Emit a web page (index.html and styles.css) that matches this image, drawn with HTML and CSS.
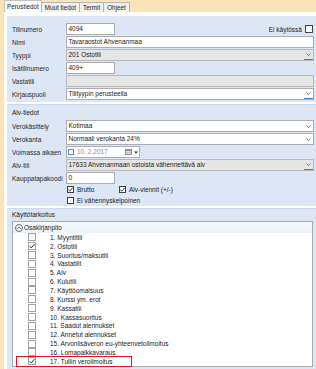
FILE: index.html
```html
<!DOCTYPE html>
<html lang="fi">
<head>
  <meta charset="UTF-8" />
  <title>Tili</title>
  <link rel="stylesheet" href="styles.css">
</head>
<body>
  <div class="window">
    <div class="tabs">
      <div class="tab active">Perustiedot</div>
      <div class="tab">Muut tiedot</div>
      <div class="tab">Termit</div>
      <div class="tab">Ohjeet</div>
    </div>

    <div class="page">
      <div class="panel main">
        <div class="row">
          <label>Tilinumero</label>
          <div class="field short">4094</div>
          <div class="spacer"></div>
          <span class="side-label">Ei käytössä</span>
          <span class="check big"></span>
        </div>
        <div class="row">
          <label>Nimi</label>
          <div class="field">Tavaraostot Ahvenanmaa</div>
        </div>
        <div class="row">
          <label>Tyyppi</label>
          <div class="field combo locked"><span>201 Ostotili</span><span class="drop blue"><svg width="5" height="3" viewBox="0 0 5 3"><path d="M0.5 0.5 L2.5 2.5 L4.5 0.5" fill="none" stroke="#555" stroke-width="0.8"/></svg></span></div>
        </div>
        <div class="row">
          <label>Isätilinumero</label>
          <div class="field short">409+</div>
        </div>
        <div class="row">
          <label>Vastatili</label>
          <div class="field locked"></div>
        </div>
        <div class="row">
          <label>Kirjauspuoli</label>
          <div class="field combo"><span>Tilityypin perusteella</span><span class="drop blue"><svg width="5" height="3" viewBox="0 0 5 3"><path d="M0.5 0.5 L2.5 2.5 L4.5 0.5" fill="none" stroke="#555" stroke-width="0.8"/></svg></span></div>
        </div>
      </div>

      <div class="panel alv">
        <div class="group-title">Alv-tiedot</div>
        <div class="row">
          <label>Verokäsittely</label>
          <div class="field combo"><span>Kotimaa</span><span class="drop"><svg width="5" height="3" viewBox="0 0 5 3"><path d="M0.5 0.5 L2.5 2.5 L4.5 0.5" fill="none" stroke="#555" stroke-width="0.8"/></svg></span></div>
        </div>
        <div class="row">
          <label>Verokanta</label>
          <div class="field combo"><span>Normaali verokanta 24%</span><span class="drop"><svg width="5" height="3" viewBox="0 0 5 3"><path d="M0.5 0.5 L2.5 2.5 L4.5 0.5" fill="none" stroke="#555" stroke-width="0.8"/></svg></span></div>
        </div>
        <div class="row">
          <label>Voimassa alkaen</label>
          <div class="field date">
            <span class="date-check"></span>
            <span class="date-text">10. 2.2017</span>
            <span class="spacer"></span>
            <svg class="cal" width="7" height="6" viewBox="0 0 7 6">
              <rect x="0.5" y="0.5" width="6" height="5" fill="#e8e8e8" stroke="#8c8c8c"/>
              <rect x="0.5" y="0.5" width="6" height="1.3" fill="#8c8c8c"/>
              <path d="M2.5 2 V5.5 M4.5 2 V5.5 M0.5 3.7 H6.5" stroke="#aaa" stroke-width="0.5"/>
            </svg>
            <svg class="caret" width="4" height="3" viewBox="0 0 4 3"><path d="M0 0.5 H4 L2 2.7 Z" fill="#333"/></svg>
          </div>
        </div>
        <div class="row">
          <label>Alv-tili</label>
          <div class="field combo locked"><span>17633 Ahvenanmaan ostoista vähennettävä alv</span><span class="drop blue"><svg width="5" height="3" viewBox="0 0 5 3"><path d="M0.5 0.5 L2.5 2.5 L4.5 0.5" fill="none" stroke="#555" stroke-width="0.8"/></svg></span></div>
        </div>
        <div class="row">
          <label>Kauppatapakoodi</label>
          <div class="field short">0</div>
        </div>
        <div class="check-row">
          <span class="opt"><span class="check"><svg width="7" height="7" viewBox="0 0 7 7"><path d="M1.2 3.6 L2.8 5.2 L5.8 1.6" fill="none" stroke="#222" stroke-width="0.9"/></svg></span>Brutto</span>
          <span class="opt"><span class="check"><svg width="7" height="7" viewBox="0 0 7 7"><path d="M1.2 3.6 L2.8 5.2 L5.8 1.6" fill="none" stroke="#222" stroke-width="0.9"/></svg></span>Alv-viennit (+/-)</span>
        </div>
        <div class="check-row">
          <span class="opt"><span class="check"></span>Ei vähennyskelpoinen</span>
        </div>
      </div>

      <div class="panel usage">
        <div class="group-title">Käyttötarkoitus</div>
        <div class="tree">
          <div class="tree-head">
            <span class="toggle"><svg width="6" height="6" viewBox="0 0 6 6"><path d="M1.3 3.8 L3 2.1 L4.7 3.8" fill="none" stroke="#333" stroke-width="0.8"/></svg></span>
            Osakirjanpito
          </div>
          <div class="item"><span class="box"></span>1. Myyntitili</div>
          <div class="item"><span class="box"><svg width="8" height="8" viewBox="0 0 8 8"><path d="M1.6 4.2 L3.3 5.9 L6.5 2" fill="none" stroke="#111" stroke-width="0.9"/></svg></span>2. Ostotili</div>
          <div class="item"><span class="box"></span>3. Suoritus/maksutili</div>
          <div class="item"><span class="box"></span>4. Vastatilit</div>
          <div class="item"><span class="box"></span>5. Alv</div>
          <div class="item"><span class="box"></span>6. Kulutili</div>
          <div class="item"><span class="box"></span>7. Käyttöomaisuus</div>
          <div class="item"><span class="box"></span>8. Kurssi ym. erot</div>
          <div class="item"><span class="box"></span>9. Kassatili</div>
          <div class="item"><span class="box"></span>10. Kassasuoritus</div>
          <div class="item"><span class="box"></span>11. Saadut alennukset</div>
          <div class="item"><span class="box"></span>12. Annetut alennukset</div>
          <div class="item"><span class="box"></span>15. Arvonlisäveron eu-yhteenvetoilmoitus</div>
          <div class="item"><span class="box"></span>16. Lomapalkkavaraus</div>
          <div class="item marked"><span class="box"><svg width="8" height="8" viewBox="0 0 8 8"><path d="M1.6 4.2 L3.3 5.9 L6.5 2" fill="none" stroke="#111" stroke-width="0.9"/></svg></span>17. Tullin veroilmoitus</div>
        </div>
      </div>
    </div>
  </div>
</body>
</html>
```

FILE: styles.css
```css
* { box-sizing: border-box; }
body {
  margin: 0;
  width: 316px;
  height: 369px;
  overflow: hidden;
  background: #fbe3b8;
  font-family: 'Liberation Sans', Arial, sans-serif;
  font-size: 6.5px;
  color: #222;
}
.window {
  display: flex;
  flex-direction: column;
  height: 369px;
  padding-left: 4px;
}
.tabs {
  display: flex;
  height: 12px;
  flex: none;
}
.tab {
  height: 10px;
  margin-top: 2px;
  margin-left: -1px;
  padding: 0 3px;
  line-height: 9px;
  font-size: 6.3px;
  color: #222;
  background: #f0f0f0;
  border: 1px solid #b4b4b4;
  border-bottom: none;
}
.tab.active {
  height: 12px;
  margin-top: 0;
  margin-left: 0;
  padding: 0 2px;
  line-height: 12px;
  background: #fff;
  border-color: #c2c2c2;
}
.page {
  flex: 1;
  display: flex;
  flex-direction: column;
  gap: 2px;
  background: #fff;
  padding: 4px 0 0 3px;
  min-height: 0;
}
.panel {
  background: #dce6f4;
  padding: 0 2px 0 5px;
  flex: none;
}
.panel.main { padding-top: 7px; padding-bottom: 1px; }
.panel.alv {
  padding-top: 4px;
  box-shadow: inset 0 1px 0 #cdd9ec;
}
.panel.usage {
  flex: 1;
  display: flex;
  flex-direction: column;
  padding-top: 2px;
  box-shadow: inset 0 1px 0 #cdd9ec;
  min-height: 0;
}
.group-title {
  height: 9px;
  line-height: 9px;
  margin-bottom: 3px;
}
.usage .group-title { margin-bottom: 2px; }
.row {
  display: flex;
  align-items: center;
  height: 12px;
  margin-bottom: 1px;
}
.row label {
  width: 54px;
  flex: none;
  color: #2a2a2a;
}
.field {
  flex: 1;
  height: 12px;
  line-height: 10px;
  padding-left: 1.5px;
  background: #fff;
  border: 1px solid #abadb3;
  white-space: nowrap;
  overflow: hidden;
}
.field.short {
  flex: none;
  width: 49px;
}
.field.locked {
  background: #e6e6e6;
  border-color: #b9b9b9;
}
.field.combo {
  display: flex;
  justify-content: space-between;
}
.drop {
  width: 9px;
  height: 10px;
  display: flex;
  align-items: center;
  justify-content: center;
}
.drop.blue { border-bottom: 1px solid #3d7dc4; }
.spacer { flex: 1; }
.side-label { margin-right: 3px; }
.check {
  width: 7px;
  height: 7px;
  flex: none;
  background: #fff;
  border: 1px solid #404040;
  display: flex;
  align-items: center;
  justify-content: center;
  margin-right: 3px;
}
.check svg { margin: -1px; }
.check.big {
  width: 8px;
  height: 8px;
  margin-right: 1px;
}
.field.date {
  flex: none;
  width: 74px;
  display: flex;
  align-items: center;
  padding-left: 0.5px;
}
.date-check {
  width: 6px;
  height: 6px;
  border: 1px solid #4f8ad1;
  background: #fff;
}
.date-text {
  margin-left: 3.5px;
  color: #8c8c8c;
}
.cal { margin-right: 1.5px; }
.caret { margin-right: 1.5px; }
.check-row {
  display: flex;
  align-items: center;
  height: 9px;
  padding-left: 55px;
  margin-bottom: 1.5px;
}
.opt {
  display: flex;
  align-items: center;
  width: 52px;
  white-space: nowrap;
}
.tree {
  flex: none;
  margin-right: 1px;
  background: #fff;
  border: 1px solid #a9a9a9;
}
.tree-head {
  display: flex;
  align-items: center;
  gap: 1px;
  height: 11px;
  padding-left: 2px;
  background: linear-gradient(#f6f9fd, #ecf2fa);
}
.toggle {
  width: 8px;
  height: 8px;
  border: 1px solid #6a6a6a;
  border-radius: 50%;
  display: flex;
  align-items: center;
  justify-content: center;
}
.item {
  display: flex;
  align-items: center;
  height: 8.85px;
  padding-left: 15px;
  white-space: nowrap;
}
.box {
  width: 8px;
  height: 8px;
  flex: none;
  margin-right: 14px;
  border: 1px solid #a2a2a2;
  background: #fff;
  display: flex;
  align-items: center;
  justify-content: center;
}
.box svg { margin: -1px; }
.item.marked {
  width: 114px;
  margin-left: 3.5px;
  padding-left: 11.5px;
  outline: 1.5px solid #e3141c;
}
```
